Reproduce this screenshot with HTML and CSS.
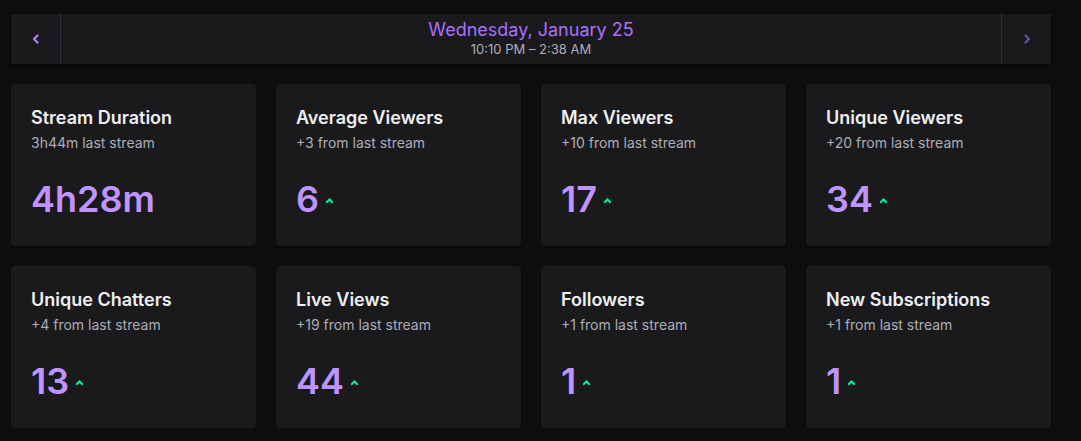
FILE: index.html
```html
<!DOCTYPE html>
<html>
<head>
<meta charset="utf-8">
<link rel="stylesheet" href="styles.css">
</head>
<body>
<div class="page">
  <div class="datebar">
    <button class="nav nav-prev" aria-label="Previous">
      <svg width="8" height="10" viewBox="0 0 8 10"><path d="M5.5 1.5 L2 5 L5.5 8.5" fill="none" stroke="currentColor" stroke-width="2.2" stroke-linecap="round" stroke-linejoin="round"/></svg>
    </button>
    <div class="date">
      <div class="date-main">Wednesday, January 25</div>
      <div class="date-time">10:10 PM – 2:38 AM</div>
    </div>
    <button class="nav nav-next" aria-label="Next">
      <svg width="8" height="10" viewBox="0 0 8 10"><path d="M2.5 1.5 L6 5 L2.5 8.5" fill="none" stroke="currentColor" stroke-width="2.2" stroke-linecap="round" stroke-linejoin="round"/></svg>
    </button>
  </div>
  <div class="grid">
    <div class="card"><div class="title">Stream Duration</div><div class="sub">3h44m last stream</div><div class="value"><span class="num">4h28m</span></div></div>
    <div class="card"><div class="title">Average Viewers</div><div class="sub">+3 from last stream</div><div class="value"><span class="num">6</span><svg class="up" width="9" height="6" viewBox="0 0 9 6"><path d="M1.2 4.8 L4.5 1.5 L7.8 4.8" fill="none" stroke="currentColor" stroke-width="2"/></svg></div></div>
    <div class="card"><div class="title">Max Viewers</div><div class="sub">+10 from last stream</div><div class="value"><span class="num">17</span><svg class="up" width="9" height="6" viewBox="0 0 9 6"><path d="M1.2 4.8 L4.5 1.5 L7.8 4.8" fill="none" stroke="currentColor" stroke-width="2"/></svg></div></div>
    <div class="card"><div class="title">Unique Viewers</div><div class="sub">+20 from last stream</div><div class="value"><span class="num">34</span><svg class="up" width="9" height="6" viewBox="0 0 9 6"><path d="M1.2 4.8 L4.5 1.5 L7.8 4.8" fill="none" stroke="currentColor" stroke-width="2"/></svg></div></div>
    <div class="card"><div class="title">Unique Chatters</div><div class="sub">+4 from last stream</div><div class="value"><span class="num">13</span><svg class="up" width="9" height="6" viewBox="0 0 9 6"><path d="M1.2 4.8 L4.5 1.5 L7.8 4.8" fill="none" stroke="currentColor" stroke-width="2"/></svg></div></div>
    <div class="card"><div class="title">Live Views</div><div class="sub">+19 from last stream</div><div class="value"><span class="num">44</span><svg class="up" width="9" height="6" viewBox="0 0 9 6"><path d="M1.2 4.8 L4.5 1.5 L7.8 4.8" fill="none" stroke="currentColor" stroke-width="2"/></svg></div></div>
    <div class="card"><div class="title">Followers</div><div class="sub">+1 from last stream</div><div class="value"><span class="num">1</span><svg class="up" width="9" height="6" viewBox="0 0 9 6"><path d="M1.2 4.8 L4.5 1.5 L7.8 4.8" fill="none" stroke="currentColor" stroke-width="2"/></svg></div></div>
    <div class="card"><div class="title">New Subscriptions</div><div class="sub">+1 from last stream</div><div class="value"><span class="num">1</span><svg class="up" width="9" height="6" viewBox="0 0 9 6"><path d="M1.2 4.8 L4.5 1.5 L7.8 4.8" fill="none" stroke="currentColor" stroke-width="2"/></svg></div></div>
  </div>
</div>
</body>
</html>
```
FILE: styles.css
```css
* { box-sizing: border-box; }
html, body {
  margin: 0;
  padding: 0;
  background: #0e0e10;
  font-family: Inter, "Noto Sans", sans-serif;
  color: #efeff1;
}
.page {
  width: 1040px;
  margin: 14px 0 0 11px;
}
.datebar {
  display: flex;
  height: 50px;
  background: #1a1a1d;
  box-shadow: 0 1px 3px rgba(0,0,0,0.6);
}
.nav {
  width: 50px;
  flex: 0 0 50px;
  background: transparent;
  border: 0;
  padding: 0;
  display: flex;
  align-items: center;
  justify-content: center;
  cursor: pointer;
}
.nav-prev { border-right: 1px solid #2f2f35; color: #b07cff; padding-left: 1px; }
.nav-next { border-left: 1px solid #2f2f35; color: #6c4ea8; }
.date {
  flex: 1;
  display: flex;
  flex-direction: column;
  align-items: center;
  justify-content: center;
}
.date-main {
  color: #a970ff;
  font-size: 18px;
  line-height: 22px;
  margin-top: -2px;
}
.date-time {
  color: #adadb8;
  font-size: 13px;
  line-height: 16px;
}
.grid {
  display: grid;
  grid-template-columns: repeat(4, 245px);
  column-gap: 20px;
  row-gap: 20px;
  margin-top: 20px;
}
.card {
  height: 162px;
  background: #1a1a1d;
  border-radius: 4px;
  padding: 23px 20px 0 20px;
  box-shadow: 0 1px 3px rgba(0,0,0,0.5);
}
.title {
  font-size: 18px;
  font-weight: 600;
  line-height: 22px;
  color: #efeff1;
}
.sub {
  font-size: 14px;
  line-height: 18px;
  color: #adadb8;
  margin-top: 5px;
}
.value {
  display: flex;
  align-items: center;
  margin-top: 25px;
  height: 44px;
}
.num {
  font-size: 36px;
  font-weight: 600;
  line-height: 44px;
  color: #bf94ff;
}
.up {
  color: #00f593;
  margin-left: 6px;
  margin-top: 4px;
}
```
